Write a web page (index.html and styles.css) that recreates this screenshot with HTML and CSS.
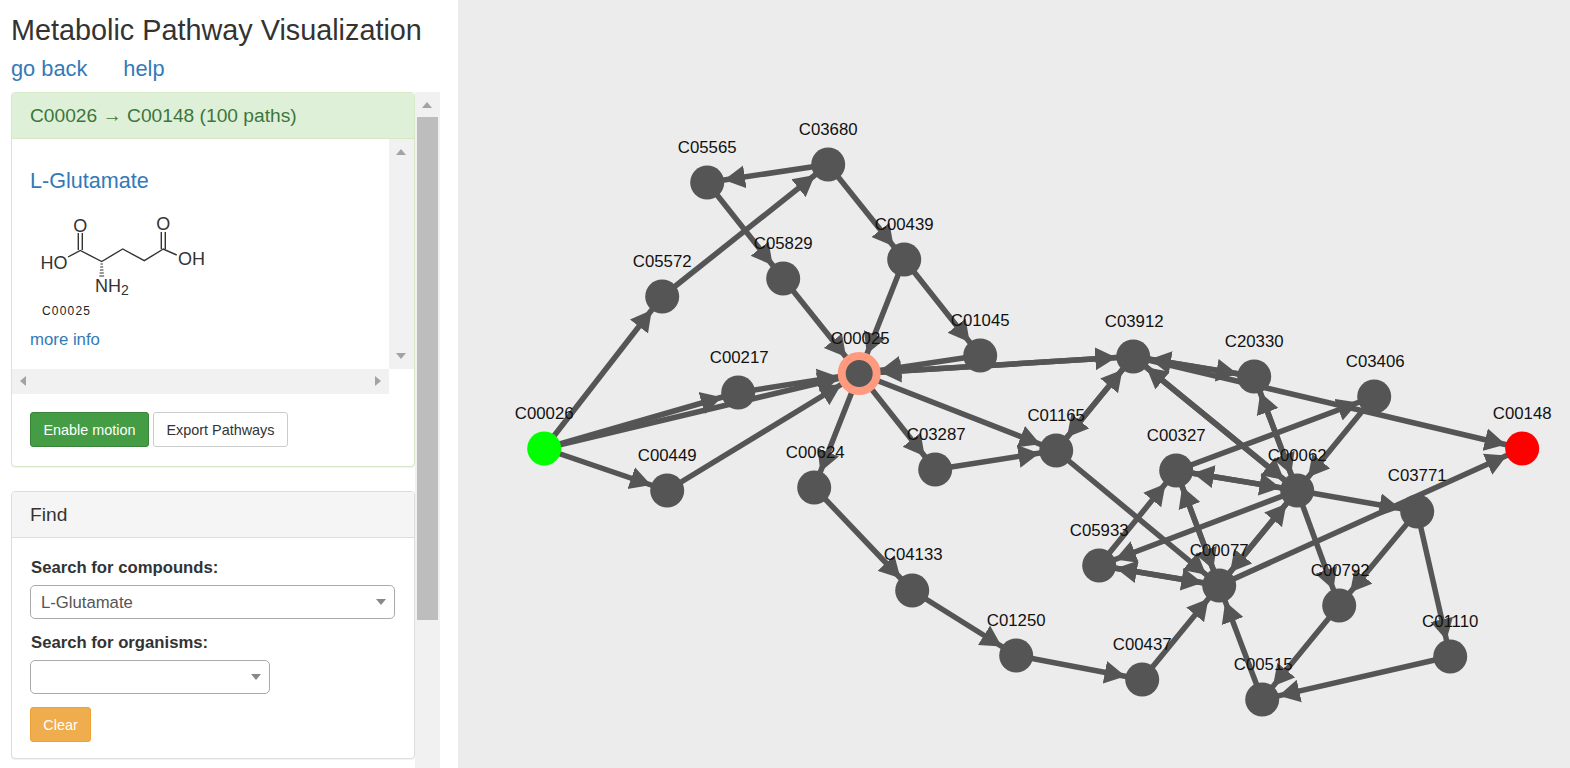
FILE: index.html
```html
<!DOCTYPE html>
<html lang="en">
<head>
    <meta charset="UTF-8">
    <title>Metabolic Pathway Visualization</title>
    <link rel="stylesheet" href="styles.css">
</head>
<body>
    <div class="sidebar">
        <h1>Metabolic Pathway Visualization</h1>
        <div class="top-links">
            <a href="#">go back</a>
            <a href="#">help</a>
        </div>
        <div class="scroller">
            <div class="scroller-content">
                <div class="panel panel-success">
                    <div class="panel-heading">C00026 → C00148 (100 paths)</div>
                    <div class="compound-view">
                        <div class="compound-row">
                            <div class="compound-info">
                                <a class="compound-name" href="#">L-Glutamate</a>
                                <svg class="molecule" width="190" height="116" viewBox="30 205 190 116">
                                    <g class="bonds">
                                        <path d="M78.3 233V250M82.3 233V250"/>
                                        <path d="M68 257L80.3 250.5L101.7 261.5L122.7 249L144.3 260.7L163.3 249L176.7 255"/>
                                        <path d="M161.300 232V249M165.300 232V249"/>
                                    </g>
                                    <path class="hash" d="M100.500 264h2.400M100.200 267h3M99.900 270h3.600M99.600 273h4.200M99.300 276h4.800"/>
                                    <g class="atoms">
                                        <text x="80.300" y="232">O</text>
                                        <text x="163.300" y="229.500">O</text>
                                        <text x="54" y="269">HO</text>
                                        <text x="191.500" y="265">OH</text>
                                        <text x="112" y="292">NH<tspan class="sub" dy="3">2</tspan></text>
                                    </g>
                                    <text class="molecule-id" x="42" y="315">C00025</text>
                                </svg>
                                <a class="more-info" href="#">more info</a>
                            </div>
                            <div class="inner-vtrack">
                                <span class="arrow-up"></span>
                                <span class="arrow-down"></span>
                            </div>
                        </div>
                        <div class="inner-htrack">
                            <span class="arrow-left"></span>
                            <span class="arrow-right"></span>
                        </div>
                    </div>
                    <div class="panel-actions">
                        <button class="btn btn-green">Enable motion</button>
                        <button class="btn btn-plain">Export Pathways</button>
                    </div>
                </div>

                <div class="panel panel-default">
                    <div class="panel-heading">Find</div>
                    <div class="panel-body">
                        <label>Search for compounds:</label>
                        <div class="select select-wide">L-Glutamate</div>
                        <label>Search for organisms:</label>
                        <div class="select select-narrow"></div>
                        <button class="btn btn-orange">Clear</button>
                    </div>
                </div>
            </div>
            <div class="outer-track">
                <span class="arrow-up"></span>
                <div class="outer-thumb"></div>
            </div>
        </div>
    </div>

    <div class="graph">
        <svg class="network" width="1112" height="768" viewBox="457.800 -0.500 1112 768">
            <defs>
                <marker id="head" markerUnits="userSpaceOnUse" markerWidth="22" markerHeight="24" viewBox="0 -12 22 24" refX="38" refY="0" orient="auto">
                    <path class="head" d="M0 -11.500L21 0L0 11.500z"/>
                </marker>
                <marker id="head-big" markerUnits="userSpaceOnUse" markerWidth="22" markerHeight="24" viewBox="0 -12 22 24" refX="42" refY="0" orient="auto">
                    <path class="head" d="M0 -11.500L21 0L0 11.500z"/>
                </marker>
            </defs>

            <g class="edges">
                <!-- C00026 side -->
                <line x1="544" y1="448" x2="662" y2="296" marker-end="url(#head)"/>
                <line x1="544" y1="448" x2="738" y2="392" marker-end="url(#head)"/>
                <line x1="544" y1="448" x2="859" y2="373" marker-end="url(#head-big)"/>
                <line x1="544" y1="448" x2="667" y2="490" marker-end="url(#head)"/>
                <line x1="662" y1="296" x2="828" y2="164" marker-end="url(#head)"/>
                <line x1="828" y1="164" x2="707" y2="182" marker-end="url(#head)"/>
                <line x1="707" y1="182" x2="783" y2="278" marker-end="url(#head)"/>
                <line x1="828" y1="164" x2="904" y2="259" marker-end="url(#head)"/>
                <line x1="783" y1="278" x2="859" y2="373" marker-end="url(#head-big)"/>
                <line x1="904" y1="259" x2="859" y2="373" marker-end="url(#head-big)"/>
                <line x1="904" y1="259" x2="980" y2="355" marker-end="url(#head)"/>
                <line x1="980" y1="355" x2="859" y2="373" marker-end="url(#head-big)"/>
                <line x1="738" y1="392" x2="859" y2="373" marker-end="url(#head-big)"/>
                <line x1="667" y1="490" x2="859" y2="373" marker-end="url(#head-big)"/>

                <!-- out of C00025 -->
                <line x1="859" y1="373" x2="814" y2="487" marker-end="url(#head)"/>
                <line x1="859" y1="373" x2="935" y2="469" marker-end="url(#head)"/>
                <line x1="859" y1="373" x2="1056" y2="450" marker-end="url(#head)"/>
                <line x1="859" y1="373" x2="1133" y2="356" marker-end="url(#head)"/>
                <line x1="1133" y1="356" x2="859" y2="373" marker-end="url(#head-big)"/>
                <line x1="935" y1="469" x2="1056" y2="450" marker-end="url(#head)"/>
                <line x1="814" y1="487" x2="912" y2="590" marker-end="url(#head)"/>
                <line x1="912" y1="590" x2="1016" y2="655" marker-end="url(#head)"/>
                <line x1="1016" y1="655" x2="1142" y2="679" marker-end="url(#head)"/>
                <line x1="1142" y1="679" x2="1219" y2="585" marker-end="url(#head)"/>

                <!-- right cluster -->
                <line x1="1056" y1="450" x2="1133" y2="356" marker-end="url(#head)"/>
                <line x1="1133" y1="356" x2="1056" y2="450" marker-end="url(#head)"/>
                <line x1="1133" y1="356" x2="1254" y2="376" marker-end="url(#head)"/>
                <line x1="1254" y1="376" x2="1133" y2="356" marker-end="url(#head)"/>
                <line x1="1133" y1="356" x2="1522" y2="448" marker-end="url(#head)"/>
                <line x1="1297" y1="490" x2="1254" y2="376" marker-end="url(#head)"/>
                <line x1="1254" y1="376" x2="1297" y2="490" marker-end="url(#head)"/>
                <line x1="1297" y1="490" x2="1133" y2="356" marker-end="url(#head)"/>
                <line x1="1133" y1="356" x2="1297" y2="490" marker-end="url(#head)"/>
                <line x1="1374" y1="396" x2="1297" y2="490" marker-end="url(#head)"/>
                <line x1="1176" y1="470" x2="1374" y2="396" marker-end="url(#head)"/>
                <line x1="1297" y1="490" x2="1176" y2="470" marker-end="url(#head)"/>
                <line x1="1176" y1="470" x2="1297" y2="490" marker-end="url(#head)"/>
                <line x1="1099" y1="565" x2="1176" y2="470" marker-end="url(#head)"/>
                <line x1="1219" y1="585" x2="1176" y2="470" marker-end="url(#head)"/>
                <line x1="1176" y1="470" x2="1219" y2="585" marker-end="url(#head)"/>
                <line x1="1297" y1="490" x2="1099" y2="565" marker-end="url(#head)"/>
                <line x1="1099" y1="565" x2="1219" y2="585" marker-end="url(#head)"/>
                <line x1="1219" y1="585" x2="1099" y2="565" marker-end="url(#head)"/>
                <line x1="1297" y1="490" x2="1219" y2="585" marker-end="url(#head)"/>
                <line x1="1219" y1="585" x2="1297" y2="490" marker-end="url(#head)"/>
                <line x1="1056" y1="450" x2="1219" y2="585" marker-end="url(#head)"/>
                <line x1="1297" y1="490" x2="1417" y2="511" marker-end="url(#head)"/>
                <line x1="1297" y1="490" x2="1339" y2="605" marker-end="url(#head)"/>
                <line x1="1417" y1="511" x2="1339" y2="605" marker-end="url(#head)"/>
                <line x1="1417" y1="511" x2="1450" y2="656" marker-end="url(#head)"/>
                <line x1="1450" y1="656" x2="1262" y2="699" marker-end="url(#head)"/>
                <line x1="1339" y1="605" x2="1262" y2="699" marker-end="url(#head)"/>
                <line x1="1262" y1="699" x2="1219" y2="585" marker-end="url(#head)"/>
                <line x1="1219" y1="585" x2="1522" y2="448" marker-end="url(#head)"/>
            </g>

            <g class="nodes">
                <circle cx="544" cy="448" r="17" class="node-start"/>
                <circle cx="1522" cy="448" r="17" class="node-end"/>
                <circle cx="859" cy="373" r="17.500" class="node-active"/>
                <circle cx="662" cy="296" r="17"/>
                <circle cx="828" cy="164" r="17"/>
                <circle cx="707" cy="182" r="17"/>
                <circle cx="783" cy="278" r="17"/>
                <circle cx="904" cy="259" r="17"/>
                <circle cx="980" cy="355" r="17"/>
                <circle cx="738" cy="392" r="17"/>
                <circle cx="667" cy="490" r="17"/>
                <circle cx="814" cy="487" r="17"/>
                <circle cx="935" cy="469" r="17"/>
                <circle cx="1133" cy="356" r="17"/>
                <circle cx="1254" cy="376" r="17"/>
                <circle cx="1374" cy="396" r="17"/>
                <circle cx="1056" cy="450" r="17"/>
                <circle cx="1176" cy="470" r="17"/>
                <circle cx="1297" cy="490" r="17"/>
                <circle cx="1417" cy="511" r="17"/>
                <circle cx="1099" cy="565" r="17"/>
                <circle cx="1219" cy="585" r="17"/>
                <circle cx="1339" cy="605" r="17"/>
                <circle cx="1142" cy="679" r="17"/>
                <circle cx="1262" cy="699" r="17"/>
                <circle cx="1450" cy="656" r="17"/>
                <circle cx="1016" cy="655" r="17"/>
                <circle cx="912" cy="590" r="17"/>
            </g>

            <g class="labels">
                <text x="544" y="418">C00026</text>
                <text x="1522" y="418">C00148</text>
                <text x="860" y="343">C00025</text>
                <text x="662" y="266">C05572</text>
                <text x="828" y="134">C03680</text>
                <text x="707" y="152">C05565</text>
                <text x="783" y="248">C05829</text>
                <text x="904" y="229">C00439</text>
                <text x="980" y="325">C01045</text>
                <text x="739" y="362">C00217</text>
                <text x="667" y="460">C00449</text>
                <text x="815" y="457">C00624</text>
                <text x="936" y="439">C03287</text>
                <text x="1134" y="326">C03912</text>
                <text x="1254" y="346">C20330</text>
                <text x="1375" y="366">C03406</text>
                <text x="1056" y="420">C01165</text>
                <text x="1176" y="440">C00327</text>
                <text x="1297" y="460">C00062</text>
                <text x="1417" y="480">C03771</text>
                <text x="1099" y="535">C05933</text>
                <text x="1219" y="555">C00077</text>
                <text x="1340" y="575">C00792</text>
                <text x="1142" y="649">C00437</text>
                <text x="1263" y="669">C00515</text>
                <text x="1450" y="626">C01110</text>
                <text x="1016" y="625">C01250</text>
                <text x="913" y="559">C04133</text>
            </g>
        </svg>
    </div>
</body>
</html>
```

FILE: styles.css
```css
* {
    box-sizing: border-box;
}
html, body {
    height: 100%;
}
body {
    margin: 0;
    display: flex;
    height: 768px;
    overflow: hidden;
    background: #fff;
    color: #333;
    font-family: "Liberation Sans", Arial, sans-serif;
    font-size: 15.4px;
}
a {
    color: #337ab7;
    text-decoration: none;
}

/* left column */
.sidebar {
    width: 458px;
    height: 768px;
    flex: none;
    display: flex;
    flex-direction: column;
    overflow: hidden;
}
h1 {
    margin: 13px 0 0 11px;
    font-size: 28.8px;
    font-weight: 400;
    line-height: 34px;
}
.top-links {
    display: flex;
    gap: 36px;
    margin: 9px 0 0 11px;
    font-size: 21.8px;
    line-height: 26px;
}
.scroller {
    display: flex;
    flex: 1;
    min-height: 0;
    margin-top: 10px;
    padding-left: 11px;
}
.scroller-content {
    width: 404px;
    flex: none;
}
.outer-track {
    width: 25px;
    flex: none;
    position: relative;
    padding: 25px 2px 0;
    background: #f1f1f1;
}
.outer-thumb {
    height: 503px;
    background: #bdbdbd;
}

/* fake scrollbar arrows */
.arrow-up, .arrow-down, .arrow-left, .arrow-right {
    position: absolute;
    width: 0;
    height: 0;
    border-style: solid;
    border-color: transparent;
}
.arrow-up {
    top: 10px;
    left: 7px;
    border-width: 0 5.5px 6px;
    border-bottom-color: #a3a3a3;
}
.arrow-down {
    bottom: 10px;
    left: 7px;
    border-width: 6px 5.5px 0;
    border-top-color: #a3a3a3;
}
.arrow-left {
    top: 7px;
    left: 8px;
    border-width: 5.5px 6px 5.5px 0;
    border-right-color: #a3a3a3;
}
.arrow-right {
    top: 7px;
    right: 8px;
    border-width: 5.5px 0 5.5px 6px;
    border-left-color: #a3a3a3;
}

/* panels */
.panel {
    border: 1px solid #ddd;
    border-radius: 4px;
    background: #fff;
    box-shadow: 0 1px 1px rgba(0, 0, 0, .05);
    overflow: hidden;
}
.panel-success {
    height: 375px;
    margin-bottom: 24px;
    border-color: #d6e9c6;
}
.panel-default {
    height: 268px;
}
.panel-heading {
    height: 46px;
    padding-left: 18px;
    font-size: 19.2px;
    line-height: 45px;
    border-bottom: 1px solid #ddd;
}
.panel-success .panel-heading {
    background: #dff0d8;
    color: #3c763d;
    border-bottom-color: #d6e9c6;
}
.panel-default .panel-heading {
    background: #f5f5f5;
}

/* compound box with its own scrollbars */
.compound-row {
    display: flex;
    height: 230px;
}
.compound-info {
    flex: 1;
    padding: 29px 0 0 18px;
}
.compound-name {
    display: block;
    font-size: 21.6px;
    line-height: 26px;
}
.molecule {
    display: block;
    margin: 11px 0 9px;
}
.more-info {
    display: block;
    font-size: 16.8px;
    line-height: 20px;
}
.inner-vtrack {
    width: 25px;
    flex: none;
    position: relative;
    background: #f1f1f1;
}
.inner-htrack {
    width: 377px;
    height: 25px;
    position: relative;
    background: #f1f1f1;
}
.panel-actions {
    display: flex;
    gap: 4px;
    padding: 18px 0 0 18px;
}

/* molecule drawing */
.bonds path {
    fill: none;
    stroke: #333;
    stroke-width: 1.4;
}
.hash {
    stroke: #333;
    stroke-width: 1;
}
.atoms text {
    font-size: 18px;
    fill: #333;
    text-anchor: middle;
}
.atoms .sub {
    font-size: 14px;
}
.molecule-id {
    font-size: 12px;
    letter-spacing: 1.2px;
    fill: #222;
}

/* buttons */
.btn {
    height: 35px;
    padding: 0 12px;
    border: 1px solid transparent;
    border-radius: 3px;
    font-family: inherit;
    font-size: 14.4px;
}
.btn-green {
    width: 119px;
    background: #449d44;
    border-color: #398439;
    color: #fff;
}
.btn-plain {
    width: 135px;
    background: #fff;
    border-color: #ccc;
    color: #333;
}
.btn-orange {
    display: block;
    width: 61px;
    background: #f0ad4e;
    border-color: #eea236;
    color: #fff;
}

/* find form */
.panel-body {
    padding: 19px 19px 0 18px;
}
label {
    display: block;
    margin-left: 1px;
    font-size: 16.7px;
    font-weight: 700;
    line-height: 21px;
}
.select {
    position: relative;
    height: 34px;
    margin: 7px 0 13px;
    padding-left: 10px;
    border: 1px solid #aaa;
    border-radius: 5px;
    background: #fff;
    color: #555;
    font-size: 16.7px;
    line-height: 33px;
}
.select::after {
    content: "";
    position: absolute;
    top: 13px;
    right: 8px;
    border-style: solid;
    border-width: 6px 5.5px 0;
    border-color: #888 transparent transparent;
}
.select-wide {
    width: 365px;
}
.select-narrow {
    width: 240px;
}

/* network canvas */
.graph {
    flex: 1;
    height: 768px;
    background: #ececec;
    overflow: hidden;
}
.network {
    display: block;
}
.edges line {
    stroke: #555;
    stroke-width: 5.5;
}
.head {
    fill: #555;
}
.nodes circle {
    fill: #555;
}
.nodes .node-start {
    fill: #0f0;
}
.nodes .node-end {
    fill: #f00;
}
.nodes .node-active {
    stroke: #ff9a7e;
    stroke-width: 8;
}
.labels text {
    font-size: 16.8px;
    fill: #111;
    text-anchor: middle;
}
```
